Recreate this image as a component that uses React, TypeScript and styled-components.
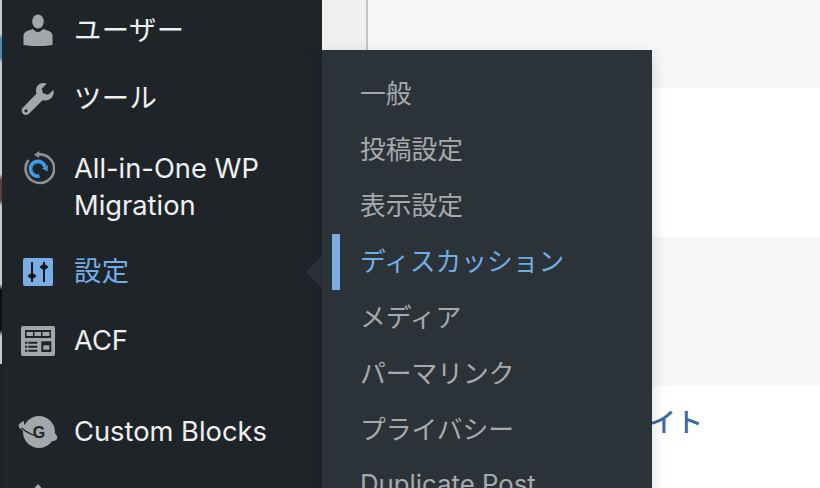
import React from "react";
import styled, { createGlobalStyle } from "styled-components";

const Global = createGlobalStyle`
  html, body { margin: 0; padding: 0; width: 820px; height: 488px; overflow: hidden; background: #fff; }
  * { box-sizing: border-box; }
`;

const FONT = `Inter, "Noto Sans CJK JP", sans-serif`;

const Page = styled.div`
  position: relative;
  display: flex;
  width: 820px;
  height: 488px;
  overflow: hidden;
  font-family: ${FONT};
`;

const EdgeStrip = styled.div`
  width: 2px;
  flex: none;
  background: linear-gradient(
    #c9cacb 0 34px,
    #4f8fb5 38px 58px,
    #c9cacb 63px 174px,
    #5a4034 180px 200px,
    #c9cacb 206px 284px,
    #0e0e0e 290px 330px,
    #c9cacb 336px 364px,
    #18261a 364px
  );
`;

const Sidebar = styled.nav`
  width: 320px;
  flex: none;
  background: #1f2429;
  display: flex;
  flex-direction: column;
  position: relative;
`;

const MenuItem = styled.div<{ $h: number; $active?: boolean; $top?: number }>`
  display: flex;
  align-items: center;
  height: ${(p) => p.$h}px;
  margin-top: ${(p) => p.$top ?? 0}px;
  flex: none;
  color: ${(p) => (p.$active ? "#72aee6" : "#f0f0f1")};
  font-size: 27.3px;
  line-height: 37.5px;
`;

const IconSlot = styled.span<{ $firstLine?: boolean }>`
  width: 72px;
  flex: none;
  display: flex;
  justify-content: center;
  align-self: ${(p) => (p.$firstLine ? "flex-start" : "center")};
  padding-top: ${(p) => (p.$firstLine ? "13px" : "0")};
`;

const Label = styled.span<{ $low?: boolean; $cjk?: boolean }>`
  display: block;
  padding-top: ${(p) => (p.$low ? "4px" : "0")};
  letter-spacing: ${(p) => (p.$cjk ? "0.5px" : "0")};
`;

const Notch = styled.div`
  position: absolute;
  right: 0;
  top: 256px;
  width: 0;
  height: 0;
  border-top: 16px solid transparent;
  border-bottom: 16px solid transparent;
  border-right: 16px solid #2c3338;
`;

const Main = styled.main`
  flex: 1;
  display: flex;
  background: #f0f0f1;
`;

const Gutter = styled.div`
  width: 46px;
  flex: none;
  border-right: 2px solid #c3c4c7;
`;

const Bands = styled.div`
  flex: 1;
  display: flex;
  flex-direction: column;
`;

const Band = styled.div<{ $h: number; $white?: boolean }>`
  height: ${(p) => p.$h}px;
  flex: none;
  background: ${(p) => (p.$white ? "#fff" : "#f6f7f7")};
`;

const LinkBand = styled(Band)`
  display: flex;
  align-items: flex-start;
  padding: 19px 0 0 254px;
`;

const SiteLink = styled.a`
  color: #3a6ea5;
  font-size: 27px;
  line-height: 36px;
  font-weight: 500;
  white-space: nowrap;
`;

const Flyout = styled.div`
  position: absolute;
  left: 322px;
  top: 50px;
  width: 330px;
  height: 460px;
  background: #2c3338;
  box-shadow: 0 6px 16px rgba(0, 0, 0, 0.16);
  padding-top: 16px;
`;

const SubItem = styled.div<{ $active?: boolean }>`
  position: relative;
  height: 56px;
  padding: 0 0 6px 38px;
  display: flex;
  align-items: center;
  font-size: 25.75px;
  color: ${(p) => (p.$active ? "#72aee6" : "#a7aaad")};
  white-space: nowrap;
  &::before {
    content: "";
    display: ${(p) => (p.$active ? "block" : "none")};
    position: absolute;
    left: 10px;
    top: 0;
    width: 8px;
    height: 56px;
    background: #7aade3;
  }
`;

const G = "#a3a6aa";
const BG = "#1f2429";

const UserIcon = () => (
  <svg width="34" height="34" viewBox="0 0 34 34">
    <ellipse cx="17" cy="9.5" rx="5.8" ry="7" fill={G} />
    <path d="M2.500 33V24c0-3 2-4.500 5-5.500l4.500-1.500c1.500 2 3.200 3 5 3s3.500-1 5-3l4.500 1.500c3 1 5 2.500 5 5.500v9c-9 1.600-20 1.600-29 0z" fill={G} />
  </svg>
);

const WrenchIcon = () => (
  <svg width="34" height="34" viewBox="0 0 34 34">
    <path d="M22.500 1C18 1 15 4.500 15 8.500c0 1.200.2 2 .6 2.900L2.200 25.300C1 26.500.7 27.500.7 28.700c0 2.400 2 4.300 4.300 4.300 1.300 0 2.300-.5 3.200-1.400L21.800 18c1 .4 1.800.5 2.700.5 4.700 0 8.300-4 8.200-8.800l-.3-1.700-5.400 4.700-5-1.500-1.200-4.600L25.700 1.700C24.800 1.200 23.700 1 22.500 1z" fill={G} />
    <circle cx="5" cy="28.800" r="1.600" fill={BG} />
  </svg>
);

const MigrationIcon = () => (
  <svg width="34" height="36" viewBox="0 0 34 36">
    <path d="M7.500 10 A14.300 14.300 0 1 0 17 4.500" fill="none" stroke="#8d9094" strokeWidth="2.600" />
    <path d="M18.500 1 L13 4.500 L18 8 Z" fill="#8d9094" />
    <path d="M24 17 A7.400 7.400 0 1 0 18.500 26" fill="none" stroke="#3d9be0" strokeWidth="3.800" />
    <path d="M21 18.500 L27 15 L26.500 21.500 Z" fill="#3d9be0" />
  </svg>
);

const SettingsIcon = () => (
  <svg width="30" height="28" viewBox="0 0 30 28">
    <rect width="30" height="28" rx="2" fill="#7aade3" />
    <path d="M8 4h2v20H8zM20 4h2v20h-2z" fill="#14181b" />
    <path d="M4.500 18 L7 15.700 H11 L13.500 18 L11 20.300 H7 Z" fill="#14181b" />
    <path d="M16.500 9 L19 6.700 H23 L25.500 9 L23 11.300 H19 Z" fill="#14181b" />
  </svg>
);

const AcfIcon = () => (
  <svg width="34" height="30" viewBox="0 0 34 30">
    <rect width="34" height="30" rx="2" fill={G} />
    <rect x="4" y="4" width="26" height="8" fill={BG} />
    <rect x="5.500" y="6" width="6.500" height="4" fill={G} />
    <rect x="13.500" y="6" width="6.500" height="4" fill={G} />
    <rect x="21.500" y="6" width="7" height="4" fill={G} />
    <path d="M4 15.700h2.300v2H4zM7.300 15.700h9v2h-9zM4 19.700h2.300v2H4zM7.300 19.700h9v2h-9zM4 23.700h2.300v2H4zM7.300 23.700h9v2h-9z" fill={BG} />
    <rect x="20.300" y="15.300" width="10" height="10.700" fill={BG} />
    <rect x="22.300" y="19.300" width="6" height="4.400" fill={G} />
  </svg>
);

const GlobeIcon = () => (
  <svg width="40" height="34" viewBox="0 0 40 34">
    <circle cx="21" cy="17" r="16" fill={G} />
    <path d="M6 6 C1 8 0 10 1 12 C4 17 20 25 34 26 C38 26 40 24 39 21 L36 17 L36 22 C24 22 10 15 6 9 Z" fill={G} />
    <path d="M3.500 13 C9 18 17 21 23 22.500" fill="none" stroke={BG} strokeWidth="1.200" />
    <text x="21" y="23" textAnchor="middle" fontFamily="Liberation Sans, sans-serif" fontWeight="700" fontSize="16" fill={BG}>G</text>
  </svg>
);

const PinIcon = () => (
  <svg width="20" height="20" viewBox="0 0 20 20">
    <path d="M10 0 L18 9 V20 H2 V9 Z" fill={G} />
  </svg>
);

export default function App() {
  return (
    <Page>
      <Global />
      <EdgeStrip />
      <Sidebar>
        <MenuItem $h={64} $top={-3}>
          <IconSlot><UserIcon /></IconSlot>
          <Label $low $cjk>ユーザー</Label>
        </MenuItem>
        <MenuItem $h={76}>
          <IconSlot><WrenchIcon /></IconSlot>
          <Label $cjk>ツール</Label>
        </MenuItem>
        <MenuItem $h={100}>
          <IconSlot $firstLine><MigrationIcon /></IconSlot>
          <Label>All-in-One WP<br />Migration</Label>
        </MenuItem>
        <MenuItem $h={69} $active>
          <IconSlot><SettingsIcon /></IconSlot>
          <Label $cjk>設定</Label>
        </MenuItem>
        <MenuItem $h={69}>
          <IconSlot><AcfIcon /></IconSlot>
          <Label>ACF</Label>
        </MenuItem>
        <MenuItem $h={70} $top={22}>
          <IconSlot><GlobeIcon /></IconSlot>
          <Label>Custom Blocks</Label>
        </MenuItem>
        <MenuItem $h={50} $top={2}>
          <IconSlot><PinIcon /></IconSlot>
        </MenuItem>
        <Notch />
      </Sidebar>
      <Main>
        <Gutter />
        <Bands>
          <Band $h={88} />
          <Band $h={149} $white />
          <Band $h={149} />
          <LinkBand $h={102} $white>
            <SiteLink>サイト</SiteLink>
          </LinkBand>
        </Bands>
      </Main>
      <Flyout>
        <SubItem>一般</SubItem>
        <SubItem>投稿設定</SubItem>
        <SubItem>表示設定</SubItem>
        <SubItem $active>ディスカッション</SubItem>
        <SubItem>メディア</SubItem>
        <SubItem>パーマリンク</SubItem>
        <SubItem>プライバシー</SubItem>
        <SubItem>Duplicate Post</SubItem>
      </Flyout>
    </Page>
  );
}
